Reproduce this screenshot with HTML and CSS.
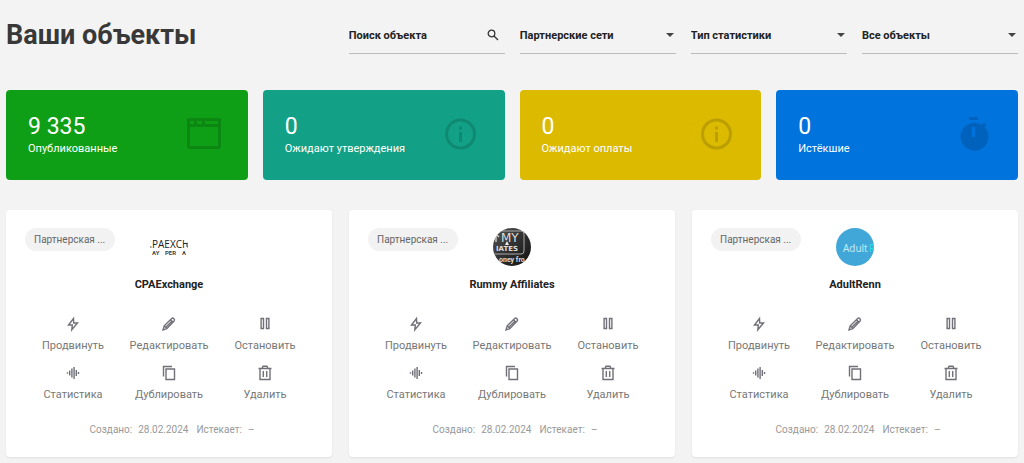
FILE: index.html
```html
<!DOCTYPE html>
<html lang="ru">
<head>
<meta charset="utf-8">
<meta name="viewport" content="width=device-width, initial-scale=1">
<title>Ваши объекты</title>
<link rel="stylesheet" href="styles.css">
</head>
<body>
<svg class="sprite" aria-hidden="true">
  <symbol id="i-bolt" viewBox="0 0 16 16"><path d="M8.500 2.500 3.500 9h3.800l-.5 4.800L12.500 7H8.700z"/></symbol>
  <symbol id="i-pencil" viewBox="0 0 16 16"><path d="m2 14 1.200-4.200 7.500-7.300q1.100-.9 2.200.2t.2 2.300L5.800 12.700zM3.500 10l2.500 2.500M9.500 3.700l2.600 2.600M5.300 10.700l5.300-5.300"/></symbol>
  <symbol id="i-pause" viewBox="0 0 16 16"><path d="M4.100 2.500h2.400v10H4.100zM9.500 2.500h2.400v10H9.500z"/></symbol>
  <symbol id="i-wave" viewBox="0 0 16 16"><path d="M2.500 7.300v1.400M4.700 5.500v5M6.900 3.500v9M9.100 2v12M11.300 5v6M13.500 7v2"/></symbol>
  <symbol id="i-copy" viewBox="0 0 16 16"><path d="M2.500 11.500v-10H11M5 4h8.500v10.500H5z"/></symbol>
  <symbol id="i-trash" viewBox="0 0 16 16"><path d="M1.500 3.500h13M5 3.500l1-2.300h4l1 2.300M3 3.500v11h10v-11M6.300 6v6M9.700 6v6"/></symbol>
  <symbol id="i-caret" viewBox="0 0 8 4"><path d="M0 0h8L4 4z"/></symbol>
  <symbol id="i-info" viewBox="0 0 36 36"><circle cx="17.500" cy="17" r="14" fill="none" stroke="currentColor" stroke-width="3"/><path d="M16 9.500h3v3h-3zM16 15h3v10h-3z"/></symbol>
</svg>

<main class="page">
  <header class="toolbar">
    <h1 class="title">Ваши объекты</h1>
    <label class="field">
      <input class="control" type="search" placeholder="Поиск объекта" aria-label="Поиск объекта">
      <svg class="search-icon" viewBox="0 0 12 12"><circle cx="4.500" cy="4.500" r="3.300"/><path d="m7 7 4 4"/></svg>
    </label>
    <label class="field">
      <select class="control" aria-label="Партнерские сети"><option>Партнерские сети</option></select>
      <svg class="caret"><use href="#i-caret"/></svg>
    </label>
    <label class="field">
      <select class="control" aria-label="Тип статистики"><option>Тип статистики</option></select>
      <svg class="caret"><use href="#i-caret"/></svg>
    </label>
    <label class="field">
      <select class="control" aria-label="Все объекты"><option>Все объекты</option></select>
      <svg class="caret"><use href="#i-caret"/></svg>
    </label>
  </header>

  <section class="stats">
    <div class="stat green">
      <div><div class="stat-value">9 335</div><div class="stat-label">Опубликованные</div></div>
      <svg class="stat-icon" viewBox="0 0 36 36"><path fill-rule="evenodd" d="M3 1h30q2 0 2 2v27q0 2-2 2H3q-2 0-2-2V3q0-2 2-2zm1 9v19h28V10zM4 4v3h4V4zm7 0v3h5V4zm8 0v3h13V4z"/></svg>
    </div>
    <div class="stat teal">
      <div><div class="stat-value">0</div><div class="stat-label">Ожидают утверждения</div></div>
      <svg class="stat-icon"><use href="#i-info"/></svg>
    </div>
    <div class="stat yellow">
      <div><div class="stat-value">0</div><div class="stat-label">Ожидают оплаты</div></div>
      <svg class="stat-icon"><use href="#i-info"/></svg>
    </div>
    <div class="stat blue">
      <div><div class="stat-value">0</div><div class="stat-label">Истёкшие</div></div>
      <svg class="stat-icon" viewBox="0 0 36 36"><path fill-rule="evenodd" d="M13 0h9v3h-9zM28.500 5.500l2 2-2 2.300a14 14 0 1 1-2.500-2zM16 10v10h3V10z"/></svg>
    </div>
  </section>

  <section class="cards">
    <article class="card">
      <div class="card-top">
        <span class="tag">Партнерская ...</span>
        <svg class="avatar" viewBox="0 0 38 38" role="img" aria-label="CPAExchange">
          <text class="logo-cpa" x="2" y="20">PAEXCH</text>
          <path d="M0 19h1.500M0 13h1M37 15v4" stroke="#333" fill="none"/>
          <text class="logo-sub" x="2" y="27">AY</text>
          <text class="logo-sub" x="15" y="27">PER</text>
          <text class="logo-sub" x="32" y="27">A</text>
        </svg>
      </div>
      <h2 class="name">CPAExchange</h2>
      <div class="actions">
        <button class="action"><svg><use href="#i-bolt"/></svg>Продвинуть</button>
        <button class="action"><svg><use href="#i-pencil"/></svg>Редактировать</button>
        <button class="action"><svg><use href="#i-pause"/></svg>Остановить</button>
        <button class="action"><svg><use href="#i-wave"/></svg>Статистика</button>
        <button class="action"><svg><use href="#i-copy"/></svg>Дублировать</button>
        <button class="action"><svg><use href="#i-trash"/></svg>Удалить</button>
      </div>
      <footer class="dates"><span>Создано:</span><span>28.02.2024</span><span class="expires">Истекает:</span><span>–</span></footer>
    </article>

    <article class="card">
      <div class="card-top">
        <span class="tag">Партнерская ...</span>
        <svg class="avatar" viewBox="0 0 38 38" role="img" aria-label="Rummy Affiliates">
          <defs><linearGradient id="dark" x1="0" y1="0" x2="1" y2="1"><stop offset="0" stop-color="#555"/><stop offset=".5" stop-color="#303030"/><stop offset="1" stop-color="#111"/></linearGradient></defs>
          <path fill="url(#dark)" d="M0 0h38v38H0z"/>
          <path d="M0 3h28q3 0 3 3v17q0 3-3 3H0" fill="none" stroke="#aaa"/>
          <text class="logo-rummy" x="8" y="14">MY</text>
          <path d="M3 14V6l3 3M1 12V9" fill="none" stroke="#ddd" stroke-width="1.3"/>
          <text class="logo-rummy small" x="3" y="23">IATES</text>
          <path d="m14 13 2 4h-4z" fill="#eee"/>
          <text class="logo-money" x="6" y="34">oney fro</text>
        </svg>
      </div>
      <h2 class="name">Rummy Affiliates</h2>
      <div class="actions">
        <button class="action"><svg><use href="#i-bolt"/></svg>Продвинуть</button>
        <button class="action"><svg><use href="#i-pencil"/></svg>Редактировать</button>
        <button class="action"><svg><use href="#i-pause"/></svg>Остановить</button>
        <button class="action"><svg><use href="#i-wave"/></svg>Статистика</button>
        <button class="action"><svg><use href="#i-copy"/></svg>Дублировать</button>
        <button class="action"><svg><use href="#i-trash"/></svg>Удалить</button>
      </div>
      <footer class="dates"><span>Создано:</span><span>28.02.2024</span><span class="expires">Истекает:</span><span>–</span></footer>
    </article>

    <article class="card">
      <div class="card-top">
        <span class="tag">Партнерская ...</span>
        <svg class="avatar" viewBox="0 0 38 38" role="img" aria-label="AdultRenn">
          <path fill="#41a7d8" d="M0 0h38v38H0z"/>
          <text class="logo-adult" x="7" y="24">Adult</text>
          <text class="logo-adult accent" x="33" y="24">R</text>
        </svg>
      </div>
      <h2 class="name">AdultRenn</h2>
      <div class="actions">
        <button class="action"><svg><use href="#i-bolt"/></svg>Продвинуть</button>
        <button class="action"><svg><use href="#i-pencil"/></svg>Редактировать</button>
        <button class="action"><svg><use href="#i-pause"/></svg>Остановить</button>
        <button class="action"><svg><use href="#i-wave"/></svg>Статистика</button>
        <button class="action"><svg><use href="#i-copy"/></svg>Дублировать</button>
        <button class="action"><svg><use href="#i-trash"/></svg>Удалить</button>
      </div>
      <footer class="dates"><span>Создано:</span><span>28.02.2024</span><span class="expires">Истекает:</span><span>–</span></footer>
    </article>
  </section>
</main>
</body>
</html>
```
FILE: styles.css
```css
* { box-sizing: border-box; }
body {
  margin: 0;
  background: #f3f3f3;
  color: #222;
  font-family: Roboto, "Noto Sans", sans-serif;
  font-size: 11px;
  line-height: 16px;
}
.sprite { display: none; }
.page { padding: 16px 6px 6px; }

.toolbar {
  display: grid;
  grid-template-columns: 21fr 10fr 10fr 10fr 10fr;
  column-gap: 15px;
  align-items: start;
}
.title {
  margin: 0;
  color: #383838;
  font-size: 27px;
  font-weight: 700;
  line-height: 38px;
  white-space: nowrap;
}
.field {
  display: grid;
  grid-template-columns: minmax(0, 1fr);
  align-items: center;
  height: 38px;
  border-bottom: 1px solid #bbb;
}
.field > * { grid-area: 1 / 1; }
.control {
  width: 100%;
  height: 37px;
  padding: 2px 24px 0 0;
  border: 0;
  outline: 0;
  background: none;
  color: #222;
  font: inherit;
  font-weight: 700;
  appearance: none;
}
.control::placeholder { color: #222; opacity: 1; }
.search-icon {
  justify-self: end;
  width: 12px;
  height: 12px;
  margin-right: 6px;
  fill: none;
  stroke: #333;
  stroke-width: 1.3;
}
.caret {
  justify-self: end;
  width: 8px;
  height: 4px;
  margin-right: 2px;
  fill: #444;
  pointer-events: none;
}

.stats {
  display: grid;
  grid-template-columns: repeat(4, 1fr);
  gap: 15px;
  margin-top: 36px;
}
.stat {
  display: flex;
  align-items: center;
  justify-content: space-between;
  padding: 23px 26px 23px 22px;
  border-radius: 4px;
  color: #fff;
}
.green { background: #0f9f16; }
.teal { background: #12a186; }
.yellow { background: #dbba00; }
.blue { background: #0073dc; }
.stat-value { font-size: 23px; line-height: 28px; }
.stat-label { font-weight: 400; }
.stat-icon {
  width: 36px;
  height: 36px;
  color: #000;
  fill: currentColor;
  opacity: .14;
}

.cards {
  display: grid;
  grid-template-columns: repeat(3, 1fr);
  gap: 17px;
  margin-top: 30px;
}
.card {
  padding: 18px 19px 19px;
  border-radius: 4px;
  background: #fff;
  box-shadow: 0 1px 2px rgba(0, 0, 0, .08);
}
.card-top {
  display: grid;
  grid-template-columns: 1fr 38px 1fr;
  align-items: start;
}
.tag {
  width: 90px;
  padding: 0 9px;
  border-radius: 12px;
  background: #f2f2f2;
  color: #666;
  font-size: 10px;
  line-height: 23px;
  white-space: nowrap;
}
.avatar {
  width: 38px;
  height: 38px;
  overflow: hidden;
  border-radius: 50%;
}
.logo-cpa { font: 500 10px "Open Sans", sans-serif; fill: #222; }
.logo-sub { font: 700 6px Roboto, sans-serif; fill: #444; }
.logo-rummy { font: 500 12px "DejaVu Sans", sans-serif; fill: #ddd; }
.logo-rummy.small { font: 700 7px "DejaVu Sans", sans-serif; }
.logo-money { font: 700 7px Roboto, sans-serif; fill: #ddd; }
.logo-adult { font: 10px "Open Sans", sans-serif; fill: #c8edf8; }
.logo-adult.accent { fill: #21e4e4; }
.name {
  margin: 11px 0 23px;
  font-size: 11px;
  font-weight: 700;
  line-height: 16px;
  text-align: center;
}
.actions {
  display: grid;
  grid-template-columns: repeat(3, 1fr);
  row-gap: 11px;
}
.action {
  display: flex;
  flex-direction: column;
  align-items: center;
  gap: 6px;
  padding: 0;
  border: 0;
  background: none;
  color: #777;
  font: inherit;
  white-space: nowrap;
}
.action svg {
  width: 16px;
  height: 16px;
  fill: none;
  stroke: #707078;
  stroke-width: 1.4;
}
.dates {
  display: flex;
  justify-content: center;
  gap: 6px;
  margin-top: 19px;
  padding-left: 6px;
  color: #999;
  font-size: 10px;
}
.expires { margin-left: 2px; }
```
